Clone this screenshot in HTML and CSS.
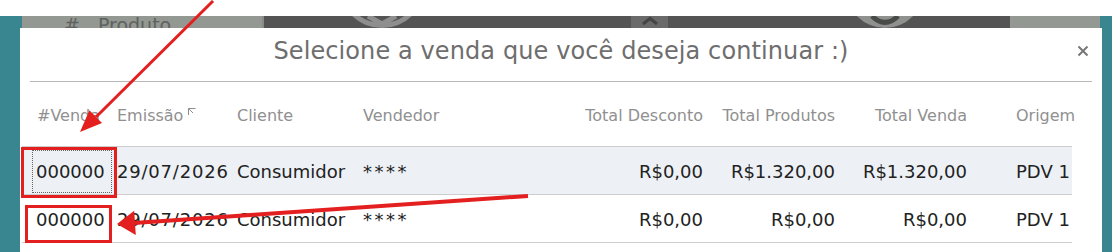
FILE: index.html
```html
<!DOCTYPE html>
<html lang="pt-BR">
<head>
<meta charset="utf-8">
<title>Selecione a venda</title>
<link rel="stylesheet" href="styles.css">
</head>
<body>
<div class="screen">
  <div class="backdrop">
    <div class="bg-teal-l"></div>
    <div class="bg-gray-l"><span class="hash">#</span><span class="prod">Produto</span></div>
    <div class="bg-dark">
      <svg class="bg-art" width="748" height="12" viewBox="0 0 748 12">
        <rect x="0" y="0" width="2" height="12" fill="#8a8a8a"/>
        <circle cx="120" cy="-31.5" r="41" fill="none" stroke="#8e8e8e" stroke-width="5"/>
        <polyline points="106,0 120,8 134,0" fill="none" stroke="#8e8e8e" stroke-width="5"/>
        <rect x="369" y="0" width="37" height="12" fill="#6a6a6a"/>
        <polyline points="381,8 388,2.5 395,8" fill="none" stroke="#444" stroke-width="3"/>
        <circle cx="623" cy="-26.7" r="38.7" fill="#8f918f"/>
        <path d="M610 0 Q623 13 636 0" fill="none" stroke="#4a4a4a" stroke-width="5"/>
      </svg>
    </div>
    <div class="bg-gray-r"></div>
    <div class="bg-teal-r"></div>
  </div>

  <div class="modal">
    <div class="modal-header">
      <span></span>
      <h1 class="modal-title">Selecione a venda que você deseja continuar :)</h1>
      <button class="close" aria-label="Fechar">
        <svg width="12" height="12" viewBox="0 0 12 12"><path d="M1.5 1.5 L10.5 10.5 M10.5 1.5 L1.5 10.5" stroke="#777" stroke-width="2" fill="none"/></svg>
      </button>
    </div>
    <div class="table">
      <div class="thead">
        <div class="c first">#Venda</div>
        <div class="c">Emissão<svg class="sort" width="9" height="9" viewBox="0 0 9 9"><path d="M1.5 8 L1.5 1.5 L8.5 1.5 M1.5 1.5 L6 6" stroke="#8d8d8d" stroke-width="1" fill="none"/></svg></div>
        <div class="c">Cliente</div>
        <div class="c">Vendedor</div>
        <div class="c r">Total Desconto</div>
        <div class="c r">Total Produtos</div>
        <div class="c r">Total Venda</div>
        <div class="c origem">Origem</div>
      </div>
      <div class="row active">
        <div class="c cell-id"><span class="id focus">000000</span></div>
        <div class="c date">29/07/2026</div>
        <div class="c">Consumidor</div>
        <div class="c mask">****</div>
        <div class="c r">R$0,00</div>
        <div class="c r">R$1.320,00</div>
        <div class="c r">R$1.320,00</div>
        <div class="c origem">PDV 1</div>
      </div>
      <div class="row">
        <div class="c cell-id"><span class="id">000000</span></div>
        <div class="c date">29/07/2026</div>
        <div class="c">Consumidor</div>
        <div class="c mask">****</div>
        <div class="c r">R$0,00</div>
        <div class="c r">R$0,00</div>
        <div class="c r">R$0,00</div>
        <div class="c origem">PDV 1</div>
      </div>
    </div>
  </div>

  <svg class="annot" width="1112" height="252" viewBox="0 0 1112 252">
    <g fill="none" stroke="#e3201f">
      <rect x="22.5" y="148.5" width="93" height="48" stroke-width="3"/>
      <rect x="26.5" y="206.5" width="84" height="35" stroke-width="3"/>
      <line x1="213" y1="1" x2="96" y2="117" stroke-width="3"/>
      <line x1="528" y1="196" x2="134" y2="223" stroke-width="4"/>
    </g>
    <g fill="#e3201f">
      <polygon points="80,132 102,123 89.4,110.2"/>
      <polygon points="117,224 135.8,235 134.2,210.8"/>
    </g>
  </svg>
</div>
</body>
</html>
```

FILE: styles.css
```css
* { box-sizing: border-box; }

html, body {
  margin: 0;
  padding: 0;
  background: #ffffff;
}

.screen {
  position: relative;
  width: 1112px;
  height: 252px;
  overflow: hidden;
  background: #ffffff;
  font-family: "DejaVu Sans", Verdana, sans-serif;
}

/* background page (mostly hidden) */
.backdrop {
  margin-top: 16px;
  height: 236px;
  display: flex;
}
.bg-teal-l { width: 22px; background: #3a8690; }
.bg-gray-l {
  width: 240px;
  background: #939893;
  color: #5f625f;
  font-size: 19px;
  line-height: 19px;
  padding-left: 42px;
  white-space: nowrap;
}
.bg-gray-l .hash { margin-right: 18px; }
.bg-dark { width: 748px; background: #545454; }
.bg-art { display: block; }
.bg-gray-r { width: 90px; background: #939893; }
.bg-teal-r { flex: 1; background: #3a8690; }

/* modal */
.modal {
  position: absolute;
  top: 28px;
  left: 20px;
  width: 1082px;
  bottom: 0;
  background: #ffffff;
}

.modal-header {
  margin: 0 10px;
  height: 54px;
  border-bottom: 1px solid #b8b8b8;
  display: grid;
  grid-template-columns: 40px 1fr 40px;
  align-items: center;
  padding-bottom: 7px;
}

.modal-title {
  margin: 0;
  font-weight: normal;
  font-size: 24px;
  letter-spacing: 0.1px;
  color: #6e6e6e;
  text-align: center;
  white-space: nowrap;
}

.close {
  justify-self: end;
  margin-right: 3px;
  border: 0;
  background: none;
  padding: 0;
  width: 12px;
  height: 12px;
}
.close svg { display: block; }

/* table */
.table {
  margin-left: 2px;
  width: 1050px;
}

.thead, .row {
  display: grid;
  grid-template-columns: 90px 120px 126px 210px 140px 132px 132px 100px;
  align-items: center;
}

.thead {
  height: 65px;
  padding-top: 2px;
  border-bottom: 1px solid #cdcdcd;
  color: #909090;
  font-size: 16px;
}

.row {
  height: 48px;
  padding-top: 2px;
  border-bottom: 1px solid #cdcdcd;
  color: #222222;
  font-size: 18px;
}
.row.active { background: #edf1f6; }

.c {
  padding-left: 5px;
  white-space: nowrap;
}
.c.first { padding-left: 15px; }
.c.r { text-align: right; padding-left: 0; padding-right: 5px; }
.c.origem { padding-left: 44px; }
.c.date { letter-spacing: 0.8px; }
.c.mask { letter-spacing: 2.5px; }

.sort {
  vertical-align: top;
  margin-left: 4px;
  margin-top: 1px;
}

.cell-id { padding-left: 0; }
.id {
  display: flex;
  align-items: center;
  margin-left: 10px;
  width: 80px;
  height: 43px;
  padding-left: 4px;
}
.id.focus { outline: 1px dotted #666; outline-offset: -1px; }

/* annotation overlay */
.annot {
  position: absolute;
  top: 0;
  left: 0;
  pointer-events: none;
}
```
